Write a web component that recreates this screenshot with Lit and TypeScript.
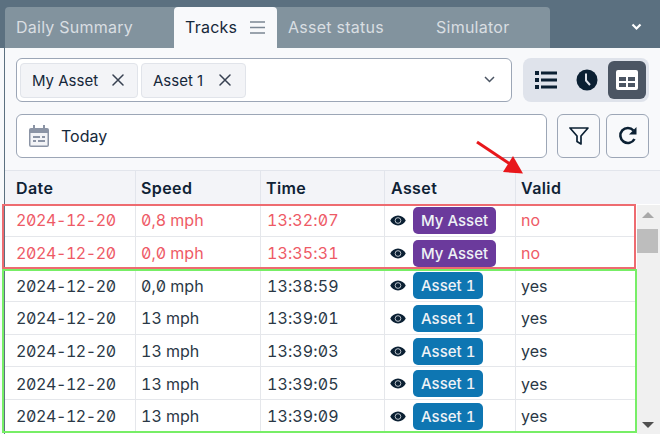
import { LitElement, html, css, svg } from "lit";
import { customElement } from "lit/decorators.js";

const rows = [
  ["2024-12-20", "0,8 mph", "13:32:07", "My Asset", "no"],
  ["2024-12-20", "0,0 mph", "13:35:31", "My Asset", "no"],
  ["2024-12-20", "0,0 mph", "13:38:59", "Asset 1", "yes"],
  ["2024-12-20", "13 mph", "13:39:01", "Asset 1", "yes"],
  ["2024-12-20", "13 mph", "13:39:03", "Asset 1", "yes"],
  ["2024-12-20", "13 mph", "13:39:05", "Asset 1", "yes"],
  ["2024-12-20", "13 mph", "13:39:09", "Asset 1", "yes"],
];

const eye = svg`<svg class="eye" viewBox="0 0 18 12" width="16" height="11"><path fill="#0b2033" d="M9 .5C5 .5 1.800 3 .3 6 1.800 9 5 11.500 9 11.500S16.200 9 17.700 6C16.200 3 13 .5 9 .5Z"/><circle cx="9" cy="6" r="3.200" fill="none" stroke="#e3e7ec" stroke-width=".9"/></svg>`;

const x = svg`<svg viewBox="0 0 12 12" width="12" height="12"><path d="M1 1l10 10M11 1L1 11" fill="none" stroke="#374151" stroke-width="1.500" stroke-linecap="round"/></svg>`;

@customElement("app-root")
export class AppRoot extends LitElement {
  static styles = css`
    :host { display: block; width: 660px; height: 434px; position: relative; overflow: hidden;
      background: #f8f9fb; font-family: Inter, "Liberation Sans", sans-serif; color: #16283a; }
    .topbar { height: 48px; background: #5b7080; display: flex; padding: 7px 0 0 5px; box-sizing: border-box; position: relative; }
    .tabs { width: 545px; height: 41px; background: #82939e; border-radius: 4px 4px 0 0; display: flex; }
    .tab { font-size: 16px; letter-spacing: .25px; color: #d9dee2; line-height: 41px; white-space: nowrap; }
    .t1 { width: 169px; padding-left: 11px; box-sizing: border-box; }
    .t2 { width: 103px; background: #f8f9fb; color: #16283a; border-radius: 4px 4px 0 0; padding-left: 11px; box-sizing: border-box; display: flex; align-items: center; gap: 13px; }
    .t3 { width: 159px; padding-left: 11px; box-sizing: border-box; }
    .chev { position: absolute; left: 631px; top: 23px; }
    .body { border-left: 1px solid #5b7080; margin-left: 4px; height: 386px; box-sizing: border-box; }
    .controls { padding: 10px 11px 0 11px; display: flex; flex-direction: column; gap: 12px; }
    .row { display: flex; height: 44px; }
    .select { width: 496px; box-sizing: border-box; background: #fff; border: 1px solid #9ca6b6; border-radius: 6px; display: flex; align-items: center; padding-left: 3px; gap: 3px; position: relative; }
    .chip { height: 35px; box-sizing: border-box; background: #f3f4f7; border: 1px solid #e1e4ea; border-radius: 4px; display: flex; align-items: center; font-size: 15px; color: #16283a; padding-left: 11px; }
    .chip.a { width: 118px; gap: 14px; }
    .chip.b { width: 105px; gap: 16px; }
    .caret { position: absolute; right: 16px; top: 17px; }
    .views { margin-left: 11px; width: 126px; background: #dfe3eb; border-radius: 8px; display: flex; align-items: center; box-sizing: border-box; padding: 0 3px; }
    .v { width: 41px; height: 38px; display: flex; align-items: center; justify-content: center; }
    .v.on { background: #4b5563; border-radius: 6px; margin-left: 1px; width: 38px; }
    .date { width: 531px; box-sizing: border-box; background: #fff; border: 1px solid #9ca6b6; border-radius: 6px; display: flex; align-items: center; padding-left: 12px; gap: 12px; font-size: 16px; color: #16283a; }
    .btn { width: 43px; box-sizing: border-box; border: 1px solid #9ca6b6; border-radius: 6px; display: flex; align-items: center; justify-content: center; margin-left: 6px; }
    .btn.f { margin-left: 10px; }
    .table { margin-top: 12px; display: grid; grid-template-columns: 131px 125px 124px 131px 1fr; }
    .th { height: 34px; box-sizing: border-box; background: #f3f4f8; border-top: 1px solid #e2e5ec; border-right: 1px solid #e2e5ec; font-weight: 600; font-size: 16px; display: flex; align-items: center; padding-left: 11px; color: #0f2235; letter-spacing: .4px; }
    .th:nth-child(2), .th:nth-child(3) { padding-left: 5px; }
    .th:nth-child(4) { padding-left: 6px; }
    .th:nth-child(5) { padding-left: 5px; border-right: 0; }
    .grid { display: grid; grid-template-columns: 131px 125px 124px 131px 120px; grid-auto-rows: 32.700px; background: #fff; height: 230px; overflow: hidden; }
    .td { box-sizing: border-box; padding-top: 1px; border-bottom: 1px solid #e5e7eb; border-right: 1px solid #e5e7eb; display: flex; align-items: center; padding-left: 5px; font-size: 16px; font-feature-settings: "tnum", "zero"; color: #2a3846; }
    .td.first { padding-left: 11px; letter-spacing: -.4px; }
    .td.time { padding-left: 6px; letter-spacing: .1px; }
    .td.as { padding-left: 5px; gap: 7px; }
    .td.last { border-right: 0; padding-left: 5px; }
    .td.red { color: #ee5a66; }
    .badge { height: 27px; border-radius: 5px; display: flex; align-items: center; padding: 0 8px; color: #eef2f6; font-size: 15px; font-weight: 500; }
    .badge.p { background: #6b3a9c; }
    .badge.b { background: #0e76b2; }
    .scrollbar { position: absolute; left: 637px; top: 205px; width: 23px; height: 229px; background: #f0f0f0; }
    .thumb { position: absolute; left: 0; top: 24px; width: 21px; height: 24px; background: #bdbdbd; }
    .up, .down { position: absolute; left: 5px; width: 0; height: 0; border-left: 6px solid transparent; border-right: 6px solid transparent; }
    .up { top: 7px; border-bottom: 6px solid #a8a8a8; }
    .down { bottom: 6px; border-top: 6px solid #505050; }
    .box { position: absolute; box-sizing: border-box; border: 2px solid; pointer-events: none; }
    .box.r { left: 2px; top: 204px; width: 634px; height: 65px; border-color: #ee6b70; }
    .box.g { left: 2px; top: 269px; width: 635px; height: 164px; border-color: #77ee66; }
    .arrow { position: absolute; left: 470px; top: 136px; }
  `;

  render() {
    return html`
      <div class="topbar">
        <div class="tabs">
          <div class="tab t1">Daily Summary</div>
          <div class="tab t2">Tracks
            <svg width="15" height="13" viewBox="0 0 15 13"><path d="M0 1h15M0 6.500h15M0 12h15" stroke="#7b8794" stroke-width="1.500"/></svg>
          </div>
          <div class="tab t3">Asset status</div>
          <div class="tab">Simulator</div>
        </div>
        <svg class="chev" width="11" height="8" viewBox="0 0 11 8"><path d="M1.500 1.500l4 4 4-4" fill="none" stroke="#fff" stroke-width="2.200"/></svg>
      </div>
      <div class="body">
        <div class="controls">
          <div class="row">
            <div class="select">
              <div class="chip a">My Asset ${x}</div>
              <div class="chip b">Asset 1 ${x}</div>
              <svg class="caret" width="11" height="7" viewBox="0 0 11 7"><path d="M1 1l4.500 4.500L10 1" fill="none" stroke="#4b5563" stroke-width="1.500"/></svg>
            </div>
            <div class="views">
              <div class="v"><svg width="22" height="18" viewBox="0 0 22 18"><path fill="#0b2033" d="M0 0h4v4H0zM0 7h4v4H0zM0 14h4v4H0zM6 .5h16v3H6zM6 7.500h16v3H6zM6 14.500h16v3H6z"/></svg></div>
              <div class="v"><svg width="22" height="22" viewBox="0 0 22 22"><circle cx="11" cy="11" r="10.500" fill="#0b2033"/><path d="M10 4.500v7l4 4.500" fill="none" stroke="#dfe3eb" stroke-width="2"/></svg></div>
              <div class="v on"><svg width="22" height="20" viewBox="0 0 22 20"><path fill-rule="evenodd" fill="#fff" d="M2 0h18a2 2 0 0 1 2 2v16a2 2 0 0 1-2 2H2a2 2 0 0 1-2-2V2a2 2 0 0 1 2-2ZM3 7v4h7V7Zm9 0v4h7V7ZM3 13v4h7v-4Zm9 0v4h7v-4Z"/></svg></div>
            </div>
          </div>
          <div class="row">
            <div class="date">
              <svg width="20" height="22" viewBox="0 0 20 22"><path fill="#8b94a5" d="M2 3h16a2 2 0 0 1 2 2v15a2 2 0 0 1-2 2H2a2 2 0 0 1-2-2V5a2 2 0 0 1 2-2Z"/><path fill="#8b94a5" d="M4 0h2v4H4zM14 0h2v4h-2z"/><path fill="#f3f4f7" d="M1.500 8h17v12.500h-17z"/><path fill="#8b94a5" d="M4 11h7v2H4zM13 11h3v2h-3zM4 15h3v2H4zM9 15h7v2H9z"/></svg>
              Today
            </div>
            <div class="btn f"><svg width="20" height="20" viewBox="0 0 20 20"><path d="M1 2h18l-7 8v8l-4-2.500V10Z" fill="none" stroke="#0b2033" stroke-width="1.700" stroke-linejoin="round"/></svg></div>
            <div class="btn"><svg width="20" height="20" viewBox="0 0 20 20"><path d="M16.500 13a7.500 7.500 0 1 1-1-8.500" fill="none" stroke="#0b2033" stroke-width="2.600"/><path d="M18.500 1v7.500H11Z" fill="#0b2033"/></svg></div>
          </div>
        </div>
        <div class="table">
          <div class="th">Date</div><div class="th">Speed</div><div class="th">Time</div><div class="th">Asset</div><div class="th">Valid</div>
        </div>
        <div class="grid">
          ${rows.map((r) => {
            const c = r[4] === "no" ? "red" : "";
            return html`
              <div class="td first ${c}">${r[0]}</div>
              <div class="td ${c}">${r[1]}</div>
              <div class="td time ${c}">${r[2]}</div>
              <div class="td as">${eye}<span class="badge ${r[3] === "My Asset" ? "p" : "b"}">${r[3]}</span></div>
              <div class="td last ${c}">${r[4]}</div>`;
          })}
        </div>
      </div>
      <div class="scrollbar"><div class="up"></div><div class="thumb"></div><div class="down"></div></div>
      <div class="box g"></div>
      <div class="box r"></div>
      <svg class="arrow" width="60" height="42" viewBox="470 136 60 42"><path d="M477 142L510 164" stroke="#e8171b" stroke-width="3" fill="none"/><path d="M523 173.500L503 172L513 156Z" fill="#e8171b"/></svg>
    `;
  }
}
